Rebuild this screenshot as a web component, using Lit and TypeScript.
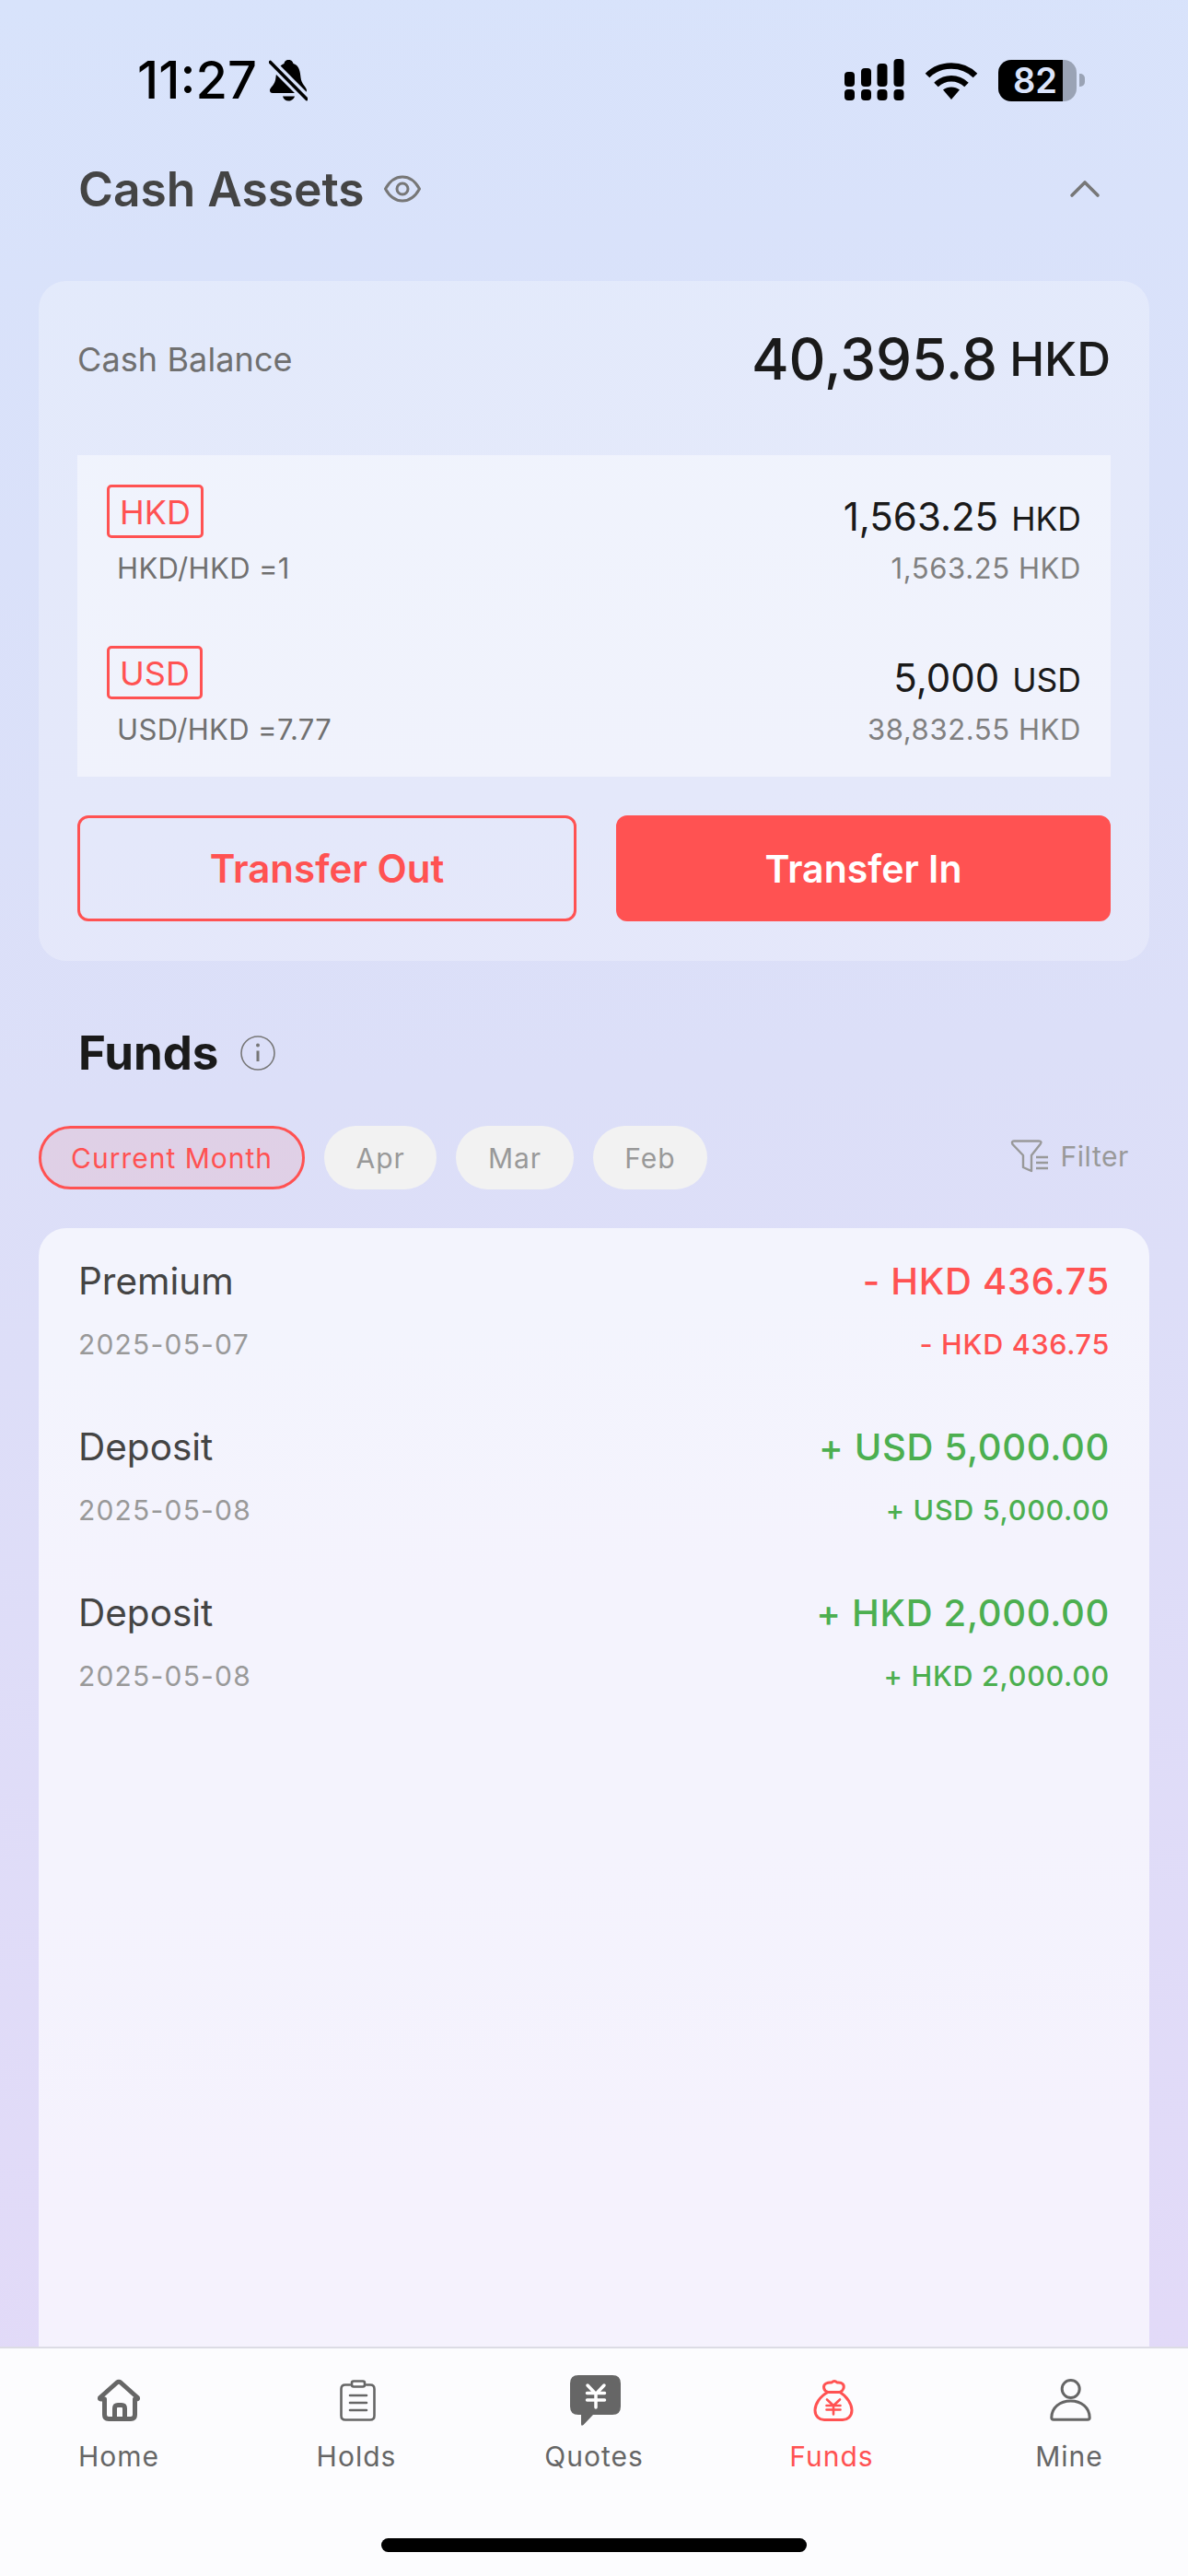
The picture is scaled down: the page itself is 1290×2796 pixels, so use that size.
import { LitElement, html, css, svg } from "lit";
import { customElement } from "lit/decorators.js";

const holdings = [
  { tag: "HKD", rate: "HKD/HKD =1", amt: "1,563.25", cur: "HKD", sub: "1,563.25 HKD" },
  { tag: "USD", rate: "USD/HKD =7.77", amt: "5,000", cur: "USD", sub: "38,832.55 HKD" },
];
const flows = [
  { name: "Premium", date: "2025-05-07", amt: "- HKD 436.75", dir: "out" },
  { name: "Deposit", date: "2025-05-08", amt: "+ USD 5,000.00", dir: "in" },
  { name: "Deposit", date: "2025-05-08", amt: "+ HKD 2,000.00", dir: "in" },
];
const navIcons: Record<string, unknown> = {
  Home: svg`<path class="s5" d="M9.5 24.5 L28 8 Q30 6.5 32 8 L50.5 24.5 Q51 26 49 26 H47.5 V43 Q47.5 47.5 43 47.5 H19 Q14.5 47.5 14.5 43 V26 H11 Q9 26 9.5 24.5Z"/><path class="s5" d="M25.5 47 V36 Q25.5 32.5 29 32.5 H33 Q36.5 32.5 36.5 36 V47"/>`,
  Holds: svg`<path class="s2" d="M23 10.5 H18 Q13.5 10.5 13.5 15 V44 Q13.5 48.5 18 48.5 H45 Q49.5 48.5 49.5 44 V15 Q49.5 10.5 45 10.5 H41"/><rect class="s2" x="25" y="6.5" width="14" height="6" rx="2"/><path class="s2" d="M23 22 H41 M23 30 H41 M23 38 H41"/>`,
  Quotes: svg`<path class="fill" d="M13 0 H50 Q59 0 59 9 V34 Q59 43 50 43 H29 L18.5 54 Q16 56 16 53 V43 H13 Q4 43 4 34 V9 Q4 0 13 0Z"/><path class="yen" d="M23 11 L32 20.5 L41 11 M22.5 19.5 H41.5 M22.5 27 H41.5 M32 20.5 V35"/>`,
  Funds: svg`<path class="s3" d="M26 18.5 C21 17 20 11 24 9 C27 7.5 28.5 8 30 8 C32 6 34 6 36 8 C38 8 40 7.5 42 9.5 C44.5 12 43 17 39 18.5 Z"/><path class="s3" d="M26 18.5 C17 23 12 32 12 38 C12 45 17 48.5 22 48.5 H42 C47 48.5 52 45 52 38 C52 32 47 23 39 18.5"/><path class="s25" d="M25 26.5 L32 33 L39 26.5 M24.5 33 H39.5 M24.5 37.5 H39.5 M32 33 V42.5"/>`,
  Mine: svg`<circle class="s3" cx="31.7" cy="15" r="9.5"/><path class="s3" d="M10.8 46 C11 35 20 28 31.7 28 C43 28 52 35 52.2 46 Q52.2 48.2 50 48.2 H13 Q10.8 48.2 10.8 46Z"/>`,
};
const navItems = ["Home", "Holds", "Quotes", "Funds", "Mine"];

@customElement("app-root")
export class AppRoot extends LitElement {
  static styles = css`
    :host {
      display: block;
      width: 1290px;
      height: 2796px;
      font-family: Inter, "Noto Sans", sans-serif;
    }
    .page {
      width: 1290px;
      height: 2796px;
      display: flex;
      flex-direction: column;
      overflow: hidden;
      background: linear-gradient(176deg, #d8e3fb 0%, #dcdff8 42%, #e3d9f8 100%);
    }
    .status {
      height: 150px;
      flex: none;
      box-sizing: border-box;
      padding: 64px 112px 0 149px;
      display: flex;
      align-items: flex-start;
      justify-content: space-between;
    }
    .status-left { display: flex; align-items: center; gap: 13px; height: 46px; }
    .time { font-size: 56px; font-weight: 500; line-height: 46px; color: #000; }
    .status-right { display: flex; align-items: center; gap: 22px; height: 46px; }
    .battery { display: flex; align-items: center; gap: 3px; }
    .battery-body {
      width: 85px;
      height: 45px;
      box-sizing: border-box;
      padding-left: 16px;
      border-radius: 14px;
      background: linear-gradient(90deg, #000 0 70px, #9aa3b5 70px);
      color: #dbe4fb;
      font-size: 38px;
      font-weight: 600;
      line-height: 45px;
    }
    .battery-cap { width: 6px; height: 14px; background: #9aa3b5; border-radius: 0 5px 5px 0; }

    .assets-head {
      height: 110px;
      flex: none;
      box-sizing: border-box;
      padding: 0 95px 0 85px;
      display: flex;
      align-items: center;
    }
    .h1 { font-size: 51.5px; font-weight: 600; color: #444; line-height: 60px; }
    .eye { margin-left: 22px; }
    .chev { margin-left: auto; }
    .card {
      flex: none;
      margin: 45px 42px 0;
      box-sizing: border-box;
      padding: 0 42px 43px;
      border-radius: 30px;
      background: rgba(255, 255, 255, 0.27);
    }
    .balance { height: 170px; display: flex; align-items: center; justify-content: space-between; margin-bottom: 19px; }
    .balance-label { font-size: 36px; color: #707070; letter-spacing: 0.1px; }
    .balance-value { display: flex; align-items: center; gap: 13px; color: #1a1a1a; font-weight: 500; line-height: 70px; }
    .bv { font-size: 62px; }
    .bc { font-size: 51px; }
    .table {
      background: rgba(255, 255, 255, 0.46);
      padding: 32px 32px 34px 32px;
      display: flex;
      flex-direction: column;
      gap: 67px;
    }
    .row { display: flex; justify-content: space-between; }
    .tag {
      width: fit-content;
      box-sizing: border-box;
      height: 58px;
      padding: 0 11px;
      border: 3px solid #ff5252;
      border-radius: 5px;
      color: #ff5252;
      font-size: 36px;
      line-height: 54px;
    }
    .rate { margin: 16px 0 0 11px; font-size: 31px; line-height: 34px; color: #707070; letter-spacing: 0.35px; }
    .right { padding-top: 11px; text-align: right; }
    .amt { line-height: 48px; color: #1a1a1a; display: flex; justify-content: flex-end; align-items: baseline; gap: 14px; }
    .amt b { font-weight: 400; font-size: 42px; }
    .amt span { font-size: 35.5px; }
    .sub { margin-top: 12px; line-height: 34px; font-size: 31px; color: #808080; letter-spacing: 0.6px; }
    .buttons { margin-top: 42px; display: grid; grid-template-columns: 542px 537px; gap: 43px; }
    .btn {
      height: 115px;
      box-sizing: border-box;
      border-radius: 12px;
      border: 3px solid #ff5252;
      font-size: 42px;
      font-weight: 600;
      display: flex;
      align-items: center;
      justify-content: center;
      color: #ff5252;
    }
    .btn.solid { background: #ff5252; color: #fff; font-size: 41px; }

    .funds-head {
      flex: none;
      margin-top: 50px;
      height: 100px;
      padding-left: 85px;
      display: flex;
      align-items: center;
      gap: 24px;
    }
    .h2 { font-size: 51px; font-weight: 700; color: #1a1a1a; line-height: 60px; }
    .chips {
      flex: none;
      margin-top: 29px;
      padding: 0 64px 0 42px;
      display: flex;
      align-items: center;
      gap: 21px;
    }
    .chip {
      height: 69px;
      box-sizing: border-box;
      padding: 0 34.5px;
      border-radius: 35px;
      background: #f2f2f2;
      color: #999;
      font-size: 30px;
      letter-spacing: 1px;
      display: flex;
      align-items: center;
    }
    .chip.on {
      background: rgba(255, 82, 82, 0.1);
      border: 3px solid #ff5252;
      color: #ff5252;
      padding: 0 32px;
      letter-spacing: 1px;
      font-weight: 400;
    }
    .filter {
      margin-left: auto;
      display: flex;
      align-items: center;
      gap: 12px;
      font-size: 30px;
      letter-spacing: 0.6px;
      color: #999;
      margin-top: -4px;
    }
    .list {
      flex: 1;
      min-height: 0;
      margin: 42px 42px 0;
      box-sizing: border-box;
      padding: 30px 43px 0 43px;
      border-radius: 30px 30px 0 0;
      background: rgba(255, 255, 255, 0.65);
      display: flex;
      flex-direction: column;
      gap: 62px;
    }
    .flow { display: flex; justify-content: space-between; }
    .flow-name { font-size: 40.5px; line-height: 56px; color: #444; }
    .flow-date { margin-top: 18px; font-size: 30px; line-height: 44px; color: #999; letter-spacing: 1.2px; }
    .flow-r { text-align: right; }
    .flow-amt { font-size: 40px; line-height: 56px; font-weight: 500; letter-spacing: 0.7px; }
    .flow-sub { margin-top: 18px; font-size: 30.5px; line-height: 44px; font-weight: 500; letter-spacing: 0.7px; }
    .out { color: #ff5252; }
    .in { color: #4caf50; }

    .nav {
      flex: none;
      height: 249px;
      box-sizing: border-box;
      border-top: 2px solid #dcdce4;
      background: #fcfcfe;
      display: flex;
      flex-direction: column;
      align-items: center;
    }
    .tabs { width: 100%; display: grid; grid-template-columns: repeat(5, 258px); padding-top: 29px; }
    .tab { display: flex; flex-direction: column; align-items: center; color: #666; }
    .tab.active { color: #ff5252; }
    .tab svg { display: block; }
    .tab-label { margin-top: 14px; font-size: 30px; line-height: 36px; letter-spacing: 1px; font-weight: 400; }
    .s5 { fill: none; stroke: currentColor; stroke-width: 5; stroke-linejoin: round; stroke-linecap: round; }
    .s3 { fill: none; stroke: currentColor; stroke-width: 3; stroke-linejoin: round; stroke-linecap: round; }
    .s2 { fill: none; stroke: currentColor; stroke-width: 2.6; stroke-linejoin: round; stroke-linecap: round; }
    .s25 { fill: none; stroke: currentColor; stroke-width: 2.6; stroke-linecap: round; stroke-linejoin: round; }
    .fill { fill: currentColor; }
    .yen { fill: none; stroke: #fff; stroke-width: 3.5; stroke-linecap: round; stroke-linejoin: round; }
    .indicator { margin-top: 71px; width: 462px; height: 15px; border-radius: 8px; background: #000; }
  `;

  render() {
    return html`<div class="page">
      <div class="status">
        <div class="status-left">
          <span class="time">11:27</span>
          <svg width="42" height="46" viewBox="0 0 42 46">
            <path fill="#000" d="M21.5 1 C25 1 26 3.5 26.5 5 C33 7 34 14 34.5 20 C35 27 41 31 41 34 C41 36 40 37 38 37 H4 C2 37 1 36 1 34 C1 31 7 28 7.5 20 C8 14 11 7 16.5 5 C17 3 18 1 21.5 1Z"/>
            <path fill="#000" d="M15 40.5 H28 C27 44 24 45.5 21.5 45.5 C18 45.5 16 44 15 40.5Z"/>
            <path d="M1 3 L41 43" stroke="#d8e3fb" stroke-width="10"/>
            <path d="M1.5 3.5 L41 43.5" stroke="#000" stroke-width="3.6" stroke-linecap="round"/>
          </svg>
        </div>
        <div class="status-right">
          <svg width="65" height="46" viewBox="0 0 65 46" fill="#000">
            <rect x="0" y="14" width="11" height="16" rx="4"/><rect x="18" y="10" width="11" height="20" rx="4"/>
            <rect x="35.5" y="5" width="11" height="25" rx="4"/><rect x="53.5" y="0" width="11" height="30" rx="4"/>
            <rect x="0" y="33" width="11" height="12" rx="4"/><rect x="18" y="33" width="11" height="12" rx="4"/>
            <rect x="35.5" y="33" width="11" height="12" rx="4"/><rect x="53.5" y="33" width="11" height="12" rx="4"/>
          </svg>
          <svg width="58" height="44" viewBox="0 0 58 44">
            <path fill="none" stroke="#000" stroke-width="6.5" d="M3 17 C17 3 41 3 55 17"/>
            <path fill="none" stroke="#000" stroke-width="6.5" d="M12.5 27 C22 18 36 18 45.5 27"/>
            <path fill="#000" d="M29 43 L20 32.5 C25 28.5 33 28.5 38 32.5 Z"/>
          </svg>
          <div class="battery">
            <div class="battery-body">82</div>
            <div class="battery-cap"></div>
          </div>
        </div>
      </div>

      <div class="assets-head">
        <span class="h1">Cash Assets</span>
        <svg class="eye" width="40" height="30" viewBox="0 0 40 30" fill="none" stroke="#777" stroke-width="3">
          <path d="M1.5 15 C7 5 13 2 20 2 C27 2 33 5 38.5 15 C33 25 27 28 20 28 C13 28 7 25 1.5 15Z" stroke-linejoin="round"/>
          <circle cx="20" cy="15" r="6"/>
        </svg>
        <svg class="chev" width="34" height="20" viewBox="0 0 34 20" fill="none" stroke="#777" stroke-width="3.6" stroke-linecap="round" stroke-linejoin="round">
          <path d="M3 17 L17 3 L31 17"/>
        </svg>
      </div>

      <div class="card">
        <div class="balance">
          <span class="balance-label">Cash Balance</span>
          <span class="balance-value"><span class="bv">40,395.8</span><span class="bc">HKD</span></span>
        </div>
        <div class="table">
          ${holdings.map(
            (h) => html`<div class="row">
              <div>
                <div class="tag">${h.tag}</div>
                <div class="rate">${h.rate}</div>
              </div>
              <div class="right">
                <div class="amt"><b>${h.amt}</b><span>${h.cur}</span></div>
                <div class="sub">${h.sub}</div>
              </div>
            </div>`
          )}
        </div>
        <div class="buttons">
          <div class="btn">Transfer Out</div>
          <div class="btn solid">Transfer In</div>
        </div>
      </div>

      <div class="funds-head">
        <span class="h2">Funds</span>
        <svg width="38" height="38" viewBox="0 0 38 38">
          <circle cx="19" cy="19" r="18" fill="none" stroke="#777" stroke-width="1.6"/>
          <circle cx="19" cy="10.5" r="2" fill="#777"/>
          <path d="M19 16.5 V28" stroke="#777" stroke-width="3"/>
        </svg>
      </div>

      <div class="chips">
        <div class="chip on">Current Month</div>
        <div class="chip">Apr</div>
        <div class="chip">Mar</div>
        <div class="chip">Feb</div>
        <div class="filter">
          <svg width="42" height="37" viewBox="0 0 42 37" fill="none" stroke="#999" stroke-width="2.4" stroke-linejoin="round">
            <path d="M4 2.5 H31 Q35 2.5 32.5 6 L23 18 V35 L14 31 V18 L2.5 6 Q1 2.5 4 2.5Z"/>
            <path d="M28 20 H41 M28 26 H41 M28 32 H41"/>
          </svg>
          <span>Filter</span>
        </div>
      </div>

      <div class="list">
        ${flows.map(
          (f) => html`<div class="flow">
            <div>
              <div class="flow-name">${f.name}</div>
              <div class="flow-date">${f.date}</div>
            </div>
            <div class="flow-r ${f.dir}">
              <div class="flow-amt">${f.amt}</div>
              <div class="flow-sub">${f.amt}</div>
            </div>
          </div>`
        )}
      </div>

      <div class="nav">
        <div class="tabs">
          ${navItems.map(
            (n) => html`<div class="tab ${n === "Funds" ? "active" : ""}">
              <svg width="60" height="56" viewBox="0 0 60 56" style="overflow:visible">${navIcons[n]}</svg>
              <span class="tab-label">${n}</span>
            </div>`
          )}
        </div>
        <div class="indicator"></div>
      </div>
    </div>`;
  }
}
